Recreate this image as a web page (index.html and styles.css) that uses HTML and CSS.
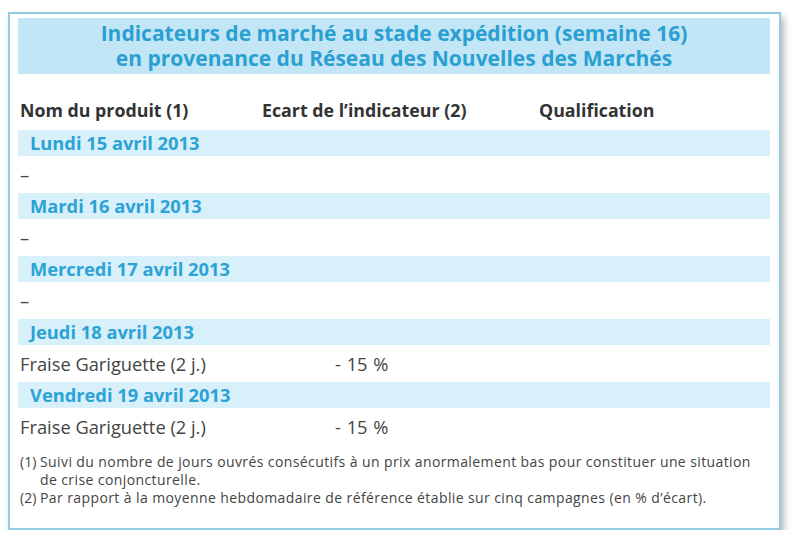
FILE: index.html
```html
<!DOCTYPE html>
<html lang="fr">
<head>
<meta charset="utf-8">
<title>Indicateurs de marché</title>
<link rel="stylesheet" href="styles.css">
</head>
<body>
<div class="box">
  <div class="title">
    <div>Indicateurs de marché au stade expédition (semaine 16)</div>
    <div>en provenance du Réseau des Nouvelles des Marchés</div>
  </div>
  <div class="row head">
    <span>Nom du produit (1)</span>
    <span>Ecart de l’indicateur (2)</span>
    <span>Qualification</span>
  </div>
  <div class="day">Lundi 15 avril 2013</div>
  <div class="row item"><span>–</span><span></span><span></span></div>
  <div class="day">Mardi 16 avril 2013</div>
  <div class="row item"><span>–</span><span></span><span></span></div>
  <div class="day">Mercredi 17 avril 2013</div>
  <div class="row item"><span>–</span><span></span><span></span></div>
  <div class="day">Jeudi 18 avril 2013</div>
  <div class="row item"><span>Fraise Gariguette (2 j.)</span><span class="val">- 15 %</span><span></span></div>
  <div class="day">Vendredi 19 avril 2013</div>
  <div class="row item"><span>Fraise Gariguette (2 j.)</span><span class="val">- 15 %</span><span></span></div>
  <div class="notes">
    <div class="note"><span class="num">(1)</span><span>Suivi du nombre de jours ouvrés consécutifs à un prix anormalement bas pour constituer une situation de crise conjoncturelle.</span></div>
    <div class="note"><span class="num">(2)</span><span>Par rapport à la moyenne hebdomadaire de référence établie sur cinq campagnes (en % d’écart).</span></div>
  </div>
</div>
</body>
</html>
```
FILE: styles.css
```css
html, body {
  margin: 0;
  padding: 0;
  background: #ffffff;
}
body {
  padding: 12px 0 0 8px;
  font-family: "Open Sans", Lato, sans-serif;
  color: #444;
}
.box {
  box-sizing: border-box;
  width: 773px;
  height: 518px;
  border: 2px solid #93cbe3;
  padding: 4px 9px 0 8px;
  box-shadow: 3px 5px 7px rgba(0, 0, 0, 0.28);
  display: flex;
  flex-direction: column;
}
.title {
  height: 56px;
  background: #c3e6f6;
  color: #2aa0d2;
  font-weight: 700;
  font-size: 21px;
  line-height: 25px;
  text-align: center;
  display: flex;
  flex-direction: column;
  justify-content: center;
  box-sizing: border-box;
}
.row {
  display: grid;
  grid-template-columns: 242px 277px 1fr;
  padding-left: 2px;
}
.head {
  padding-top: 24px;
  padding-bottom: 8px;
  line-height: 24px;
  font-weight: 700;
  font-size: 17.8px;
  color: #333;
}
.day {
  height: 26px;
  line-height: 26px;
  background: #d7f0fa;
  color: #2ba3d6;
  font-weight: 700;
  font-size: 18.3px;
  padding-left: 12px;
}
.item {
  height: 37px;
  line-height: 37px;
  font-size: 18.3px;
  color: #444;
}
.val {
  padding-left: 73px;
  word-spacing: 1px;
}
.notes {
  margin-top: 8px;
  padding-left: 2px;
  font-size: 14px;
  letter-spacing: 0.4px;
  line-height: 18px;
  color: #444;
}
.note {
  display: flex;
}
.num {
  flex: none;
  width: 20px;
  letter-spacing: 0;
}
```
